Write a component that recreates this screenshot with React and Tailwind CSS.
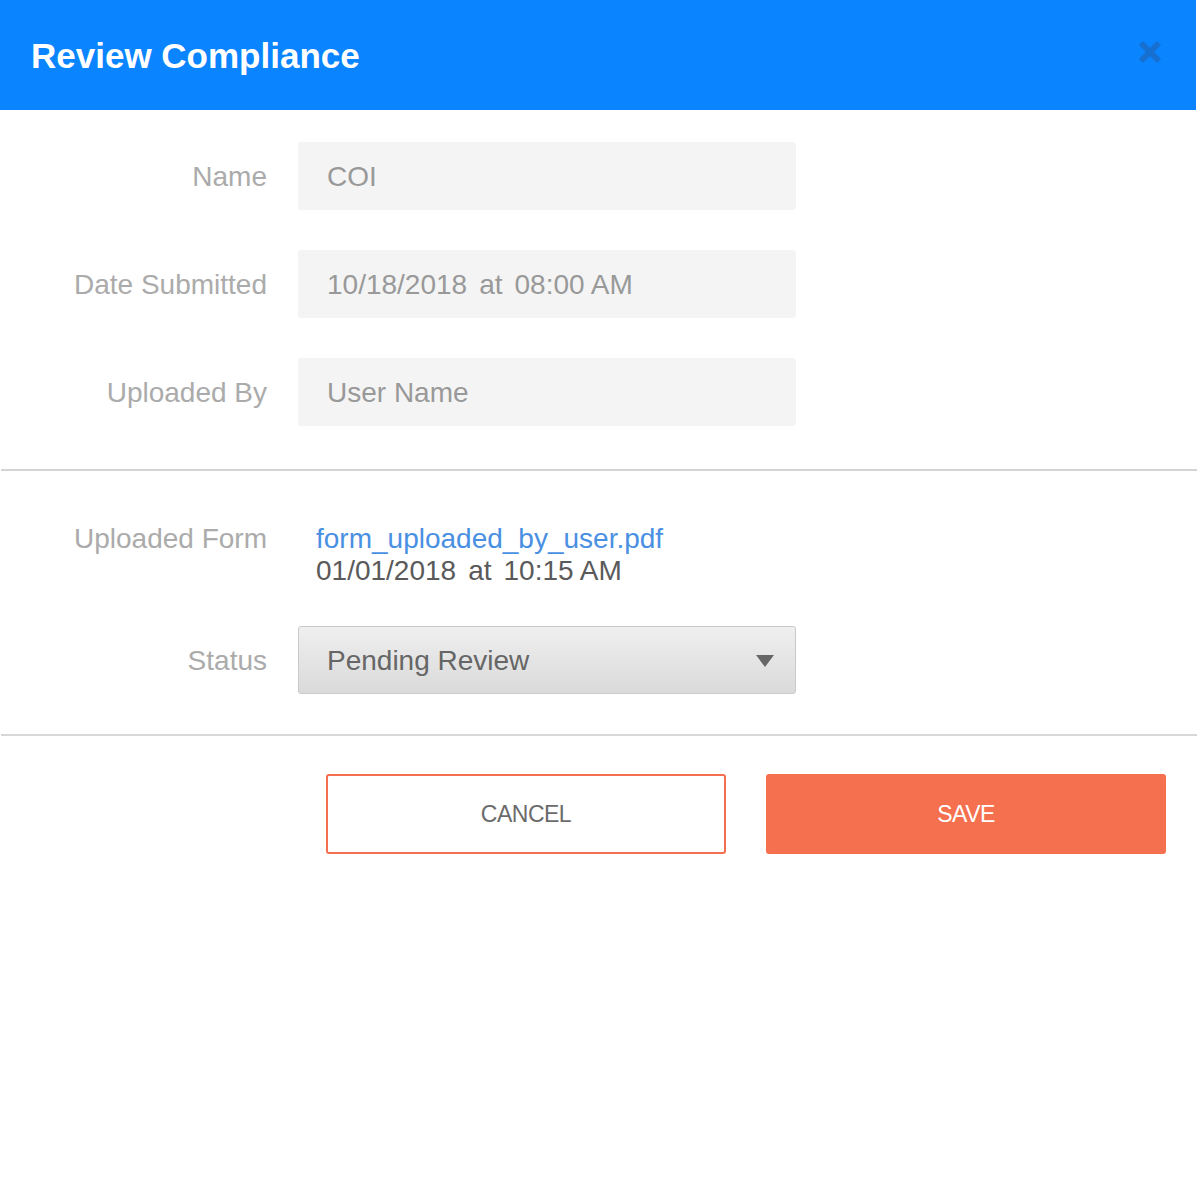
const FONT = { fontFamily: '"Liberation Sans", Arial, Helvetica, sans-serif' };

const Field = ({ label, value }) => (
  <div className="flex items-center">
    <div className="w-[267px] text-right text-[28px] text-[#ababab] leading-none pt-[2px]">{label}</div>
    <div className="ml-[31px] w-[498px] h-[68px] flex items-center pl-[29px] pt-[2px] bg-[#f4f4f4] rounded-[3px] text-[28px] text-[#999999] leading-none">
      {value}
    </div>
  </div>
);

const Stamp = ({ date, time }) => (
  <span>
    {date}
    <span className="mx-[12px]">at</span>
    {time}
  </span>
);

export default function App() {
  return (
    <div className="w-[1198px] min-h-[1200px] bg-white" style={FONT}>
      {/* Header */}
      <div className="w-[1196px] h-[110px] bg-[#0a84ff] flex items-center justify-between pl-[31px] pr-[34px]">
        <h1 className="text-[35px] font-bold text-white leading-none">Review Compliance</h1>
        <button className="w-[24px] h-[24px] flex items-center justify-center mt-[-6px]">
          <svg viewBox="0 0 24 24" className="w-[24px] h-[24px]">
            <path d="M3 3 L21 21 M21 3 L3 21" stroke="#176fcf" strokeWidth="6" strokeLinecap="butt" />
          </svg>
        </button>
      </div>

      {/* Read only fields */}
      <div className="pt-[32px] flex flex-col gap-[40px]">
        <Field label="Name" value="COI" />
        <Field label="Date Submitted" value={<Stamp date="10/18/2018" time="08:00 AM" />} />
        <Field label="Uploaded By" value="User Name" />
      </div>

      <div className="mt-[43px] mx-[1px] h-[2px] bg-[#d4d4d4]" />

      {/* Uploaded form + status */}
      <div className="pt-[52px] flex flex-col">
        <div className="flex items-start">
          <div className="w-[267px] text-right text-[28px] leading-[32px] text-[#ababab]">Uploaded Form</div>
          <div className="ml-[49px] text-[28px] leading-[32px]">
            <a href="#" className="block text-[#4a90e2]">form_uploaded_by_user.pdf</a>
            <div className="text-[#5a5a5a]">
              <Stamp date="01/01/2018" time="10:15 AM" />
            </div>
          </div>
        </div>

        <div className="flex items-center mt-[39px]">
          <div className="w-[267px] text-right text-[28px] leading-none text-[#ababab] pt-[2px]">Status</div>
          <div className="ml-[31px] w-[498px] h-[68px] flex items-center justify-between pl-[28px] pr-[21px] pt-[2px] border border-[#c9c9c9] rounded-[3px] bg-gradient-to-b from-[#efefef] to-[#dadada] text-[28px] leading-none text-[#666666]">
            <span>Pending Review</span>
            <svg viewBox="0 0 18 12" className="w-[18px] h-[12px]">
              <path d="M0 0 H18 L9 12 Z" fill="#666666" />
            </svg>
          </div>
        </div>
      </div>

      <div className="mt-[40px] mx-[1px] h-[2px] bg-[#d8d8d8]" />

      {/* Actions */}
      <div className="pt-[38px] flex justify-end gap-[40px] pr-[32px]">
        <button className="w-[400px] h-[80px] border-2 border-[#f36f50] rounded-[3px] bg-white text-[23px] text-[#6b6b6b] tracking-[-0.5px]">
          CANCEL
        </button>
        <button className="w-[400px] h-[80px] rounded-[3px] bg-[#f5704f] text-[23px] text-white tracking-[-0.5px]">
          SAVE
        </button>
      </div>
    </div>
  );
}
